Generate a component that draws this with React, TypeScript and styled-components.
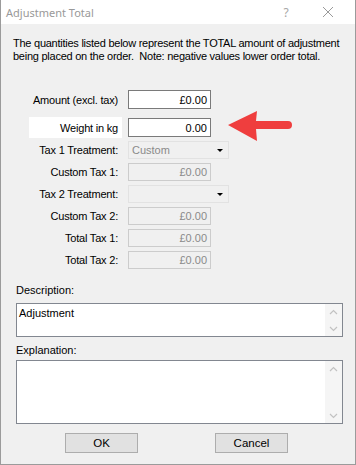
import React from "react";
import styled, { createGlobalStyle } from "styled-components";

const GlobalStyle = createGlobalStyle`
  html, body {
    margin: 0;
    padding: 0;
    background: #ffffff;
  }
  * {
    box-sizing: border-box;
  }
`;

const Window = styled.div`
  position: relative;
  width: 356px;
  height: 465px;
  display: flex;
  flex-direction: column;
  background: #f0f0f0;
  border: 1px solid #9b9b9b;
  border-top: none;
  font-family: "Liberation Sans", Arial, sans-serif;
  font-size: 11px;
  color: #000;
`;

const TitleBar = styled.div`
  height: 24px;
  flex: none;
  display: flex;
  align-items: center;
  background: #ffffff;
  padding: 0 6px 0 5px;
`;

const Title = styled.div`
  flex: 1;
  font-family: "Noto Sans", "Open Sans", sans-serif;
  font-size: 11px;
  color: #999999;
`;

const TitleButton = styled.div`
  width: 42px;
  height: 24px;
  display: flex;
  align-items: center;
  justify-content: center;
  color: #a6a6a6;
  font-family: "Noto Sans", sans-serif;
  font-size: 12px;
`;

const Body = styled.div`
  flex: 1;
  display: flex;
  flex-direction: column;
  padding: 13px 13px 0 12px;
`;

const Intro = styled.p`
  margin: 0;
  line-height: 13px;
  white-space: nowrap;
  letter-spacing: -0.25px;
`;

const Form = styled.div`
  display: flex;
  flex-direction: column;
  gap: 4px;
  margin-top: 27px;
`;

const Row = styled.div<{ $gapAfter?: number }>`
  display: grid;
  grid-template-columns: 109px auto;
  column-gap: 6px;
  align-items: center;
  margin-bottom: ${(p) => p.$gapAfter ?? 0}px;
`;

const Label = styled.div<{ $highlight?: boolean }>`
  padding-right: 4px;
  letter-spacing: -0.2px;
  align-self: stretch;
  display: flex;
  align-items: center;
  justify-content: flex-end;
  margin-left: ${(p) => (p.$highlight ? "16px" : "0")};
  height: ${(p) => (p.$highlight ? "21px" : "auto")};
  background: ${(p) => (p.$highlight ? "#ffffff" : "transparent")};
`;

const Field = styled.div<{ $disabled?: boolean }>`
  width: 83px;
  height: ${(p) => (p.$disabled ? "18px" : "19px")};
  border: 1px solid ${(p) => (p.$disabled ? "#cccccc" : "#7a7a7a")};
  background: ${(p) => (p.$disabled ? "#f0f0f0" : "#ffffff")};
  color: ${(p) => (p.$disabled ? "#8a8a8a" : "#000000")};
  display: flex;
  align-items: center;
  justify-content: flex-end;
  padding-right: 3px;
`;

const Combo = styled.div`
  width: 101px;
  height: 18px;
  border: 1px solid #e2e2e2;
  background: #f0f0f0;
  color: #8a8a8a;
  display: flex;
  align-items: center;
  padding-left: 3px;
`;

const ComboText = styled.span`
  flex: 1;
`;

const ComboArrow = styled.span`
  width: 16px;
  display: flex;
  justify-content: center;
  align-items: center;
`;

const Arrow = styled.svg`
  position: absolute;
  left: 226px;
  top: 110px;
`;

const SectionLabel = styled.div<{ $top: number }>`
  margin-top: ${(p) => p.$top}px;
  padding-left: 3px;
  line-height: 13px;
`;

const TextBox = styled.div<{ $height: number; $top: number }>`
  margin: ${(p) => p.$top}px 0 0 3px;
  width: 327px;
  height: ${(p) => p.$height}px;
  border: 1px solid #828790;
  background: #ffffff;
  display: flex;
`;

const TextContent = styled.div`
  flex: 1;
  padding: 3px 2px;
  line-height: 13px;
`;

const ScrollBar = styled.div`
  width: 17px;
  background: #f5f5f5;
  display: flex;
  flex-direction: column;
  justify-content: space-between;
  align-items: center;
  padding: 5px 0 4px;
`;

const Buttons = styled.div`
  display: flex;
  margin-top: 9px;
  padding-left: 52px;
  gap: 77px;
`;

const Button = styled.div`
  width: 73px;
  height: 20px;
  border: 1px solid #adadad;
  background: #e1e1e1;
  display: flex;
  align-items: center;
  justify-content: center;
  font-size: 11.5px;
`;

const Chevron = ({ up }: { up?: boolean }) => (
  <svg width="9" height="6" viewBox="0 0 9 6">
    <path
      d={up ? "M1 5 L4.5 1.5 L8 5" : "M1 1 L4.5 4.5 L8 1"}
      fill="none"
      stroke="#c2c2c2"
      strokeWidth="1.2"
    />
  </svg>
);

const DropArrow = () => (
  <svg width="6" height="3" viewBox="0 0 6 3">
    <path d="M0 0 L6 0 L3 3 Z" fill="#000" />
  </svg>
);

const ScrollArrows = () => (
  <ScrollBar>
    <Chevron up />
    <Chevron />
  </ScrollBar>
);

const TreatmentRow = ({ label, value }: { label: string; value?: string }) => (
  <Row>
    <Label>{label}</Label>
    <Combo>
      <ComboText>{value}</ComboText>
      <ComboArrow>
        <DropArrow />
      </ComboArrow>
    </Combo>
  </Row>
);

const DisabledRow = ({ label }: { label: string }) => (
  <Row>
    <Label>{label}</Label>
    <Field $disabled>£0.00</Field>
  </Row>
);

export default function App() {
  return (
    <>
      <GlobalStyle />
      <Window>
        <TitleBar>
          <Title>Adjustment Total</Title>
          <TitleButton>?</TitleButton>
          <TitleButton>
            <svg width="12" height="12" viewBox="0 0 12 12">
              <path d="M1 1 L11 11 M11 1 L1 11" stroke="#9a9a9a" strokeWidth="1" />
            </svg>
          </TitleButton>
        </TitleBar>
        <Body>
          <Intro>
            The quantities listed below represent the TOTAL amount of adjustment
            <br />
            being placed on the order.&nbsp; Note: negative values lower order total.
          </Intro>
          <Form>
            <Row $gapAfter={4}>
              <Label>Amount (excl. tax)</Label>
              <Field>£0.00</Field>
            </Row>
            <Row $gapAfter={-1}>
              <Label $highlight>Weight in kg</Label>
              <Field>0.00</Field>
            </Row>
            <TreatmentRow label="Tax 1 Treatment:" value="Custom" />
            <DisabledRow label="Custom Tax 1:" />
            <TreatmentRow label="Tax 2 Treatment:" />
            <DisabledRow label="Custom Tax 2:" />
            <DisabledRow label="Total Tax 1:" />
            <DisabledRow label="Total Tax 2:" />
          </Form>
          <SectionLabel $top={15}>Description:</SectionLabel>
          <TextBox $top={6} $height={34}>
            <TextContent>Adjustment</TextContent>
            <ScrollArrows />
          </TextBox>
          <SectionLabel $top={7}>Explanation:</SectionLabel>
          <TextBox $top={3} $height={64}>
            <TextContent />
            <ScrollArrows />
          </TextBox>
          <Buttons>
            <Button>OK</Button>
            <Button>Cancel</Button>
          </Buttons>
        </Body>
        <Arrow width="68" height="32" viewBox="0 0 68 32">
          <path
            d="M1 15 L30 1 L29 11 L61 11 A4 4 0 0 1 61 19 L29 19 L30 31 Z"
            fill="#ef3e3e"
          />
        </Arrow>
      </Window>
    </>
  );
}
